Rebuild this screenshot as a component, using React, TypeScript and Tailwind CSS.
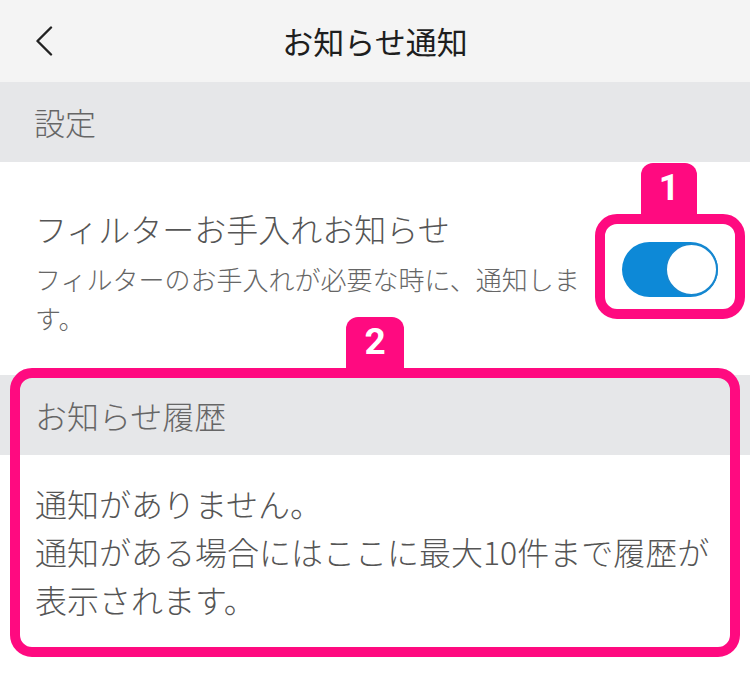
import React from "react";

const PINK = "border-[#ff0a80]";

export default function App() {
  return (
    <div
      className="relative w-[750px] h-[678px] bg-white overflow-hidden"
      style={{ fontFamily: '"Noto Sans CJK JP", "Noto Sans", sans-serif' }}
    >
      {/* Header */}
      <div className="h-[82px] bg-[#f4f4f4] grid grid-cols-[1fr_auto_1fr] items-center">
        <div className="pl-[35px] flex items-center">
          <svg width="18" height="30" viewBox="0 0 18 30" fill="none">
            <path d="M16 1.5 L2.5 15 L16 28.5" stroke="#222" strokeWidth="2.4" strokeLinecap="round" strokeLinejoin="round" />
          </svg>
        </div>
        <div className="text-[31px] leading-[44px] font-normal text-[#1e1e1e]">お知らせ通知</div>
        <div />
      </div>

      {/* Section: 設定 */}
      <div className="h-[80px] bg-[#e6e7e9] flex items-center px-[34px] text-[31px] font-light text-[#666]">設定</div>

      {/* Row */}
      <div className="h-[213px] flex justify-between">
        <div className="w-[592px] pl-[35px] pt-[44px]">
          <div className="text-[32px] leading-[44px] font-light text-[#555]">フィルターお手入れお知らせ</div>
          <div className="mt-[9px] text-[26px] leading-[39px] font-light text-[#666]">
            フィルターのお手入れが必要な時に、通知します。
          </div>
        </div>
        <div className="mt-[80px] mr-[32px] w-[96px] h-[55px] rounded-full bg-[#0d89d7] flex items-center justify-end">
          <div className="w-[53px] h-[53px] rounded-full bg-white border-[2px] border-[#1787cf]" />
        </div>
      </div>

      {/* Section: お知らせ履歴 */}
      <div className="h-[80px] bg-[#e6e7e9] flex items-center px-[35px] text-[32px] font-light text-[#666]">お知らせ履歴</div>

      {/* Body */}
      <div className="pt-[24px] pl-[35px] pr-[20px] text-[32px] leading-[48px] font-light text-[#555]">
        <div>通知がありません。</div>
        <div>通知がある場合にはここに最大10件まで履歴が表示されます。</div>
      </div>

      {/* Annotation 1 */}
      <div className="absolute left-[641px] top-[163px] w-[56px] h-[56px] rounded-t-[12px] bg-[#ff0a80] flex justify-center pt-[3px]">
        <span className="text-white text-[36px] leading-[44px] font-bold" style={{ fontFamily: "Roboto, sans-serif" }}>1</span>
      </div>
      <div className={`absolute left-[595px] top-[214px] w-[150px] h-[105px] border-[10px] ${PINK} rounded-[22px]`} />

      {/* Annotation 2 */}
      <div className="absolute left-[346px] top-[317px] w-[58px] h-[56px] rounded-t-[12px] bg-[#ff0a80] flex justify-center pt-[3px]">
        <span className="text-white text-[37px] leading-[44px] font-bold" style={{ fontFamily: "Roboto, sans-serif" }}>2</span>
      </div>
      <div className={`absolute left-[10px] top-[368px] w-[730px] h-[289px] border-[10px] ${PINK} rounded-[22px]`} />
    </div>
  );
}
